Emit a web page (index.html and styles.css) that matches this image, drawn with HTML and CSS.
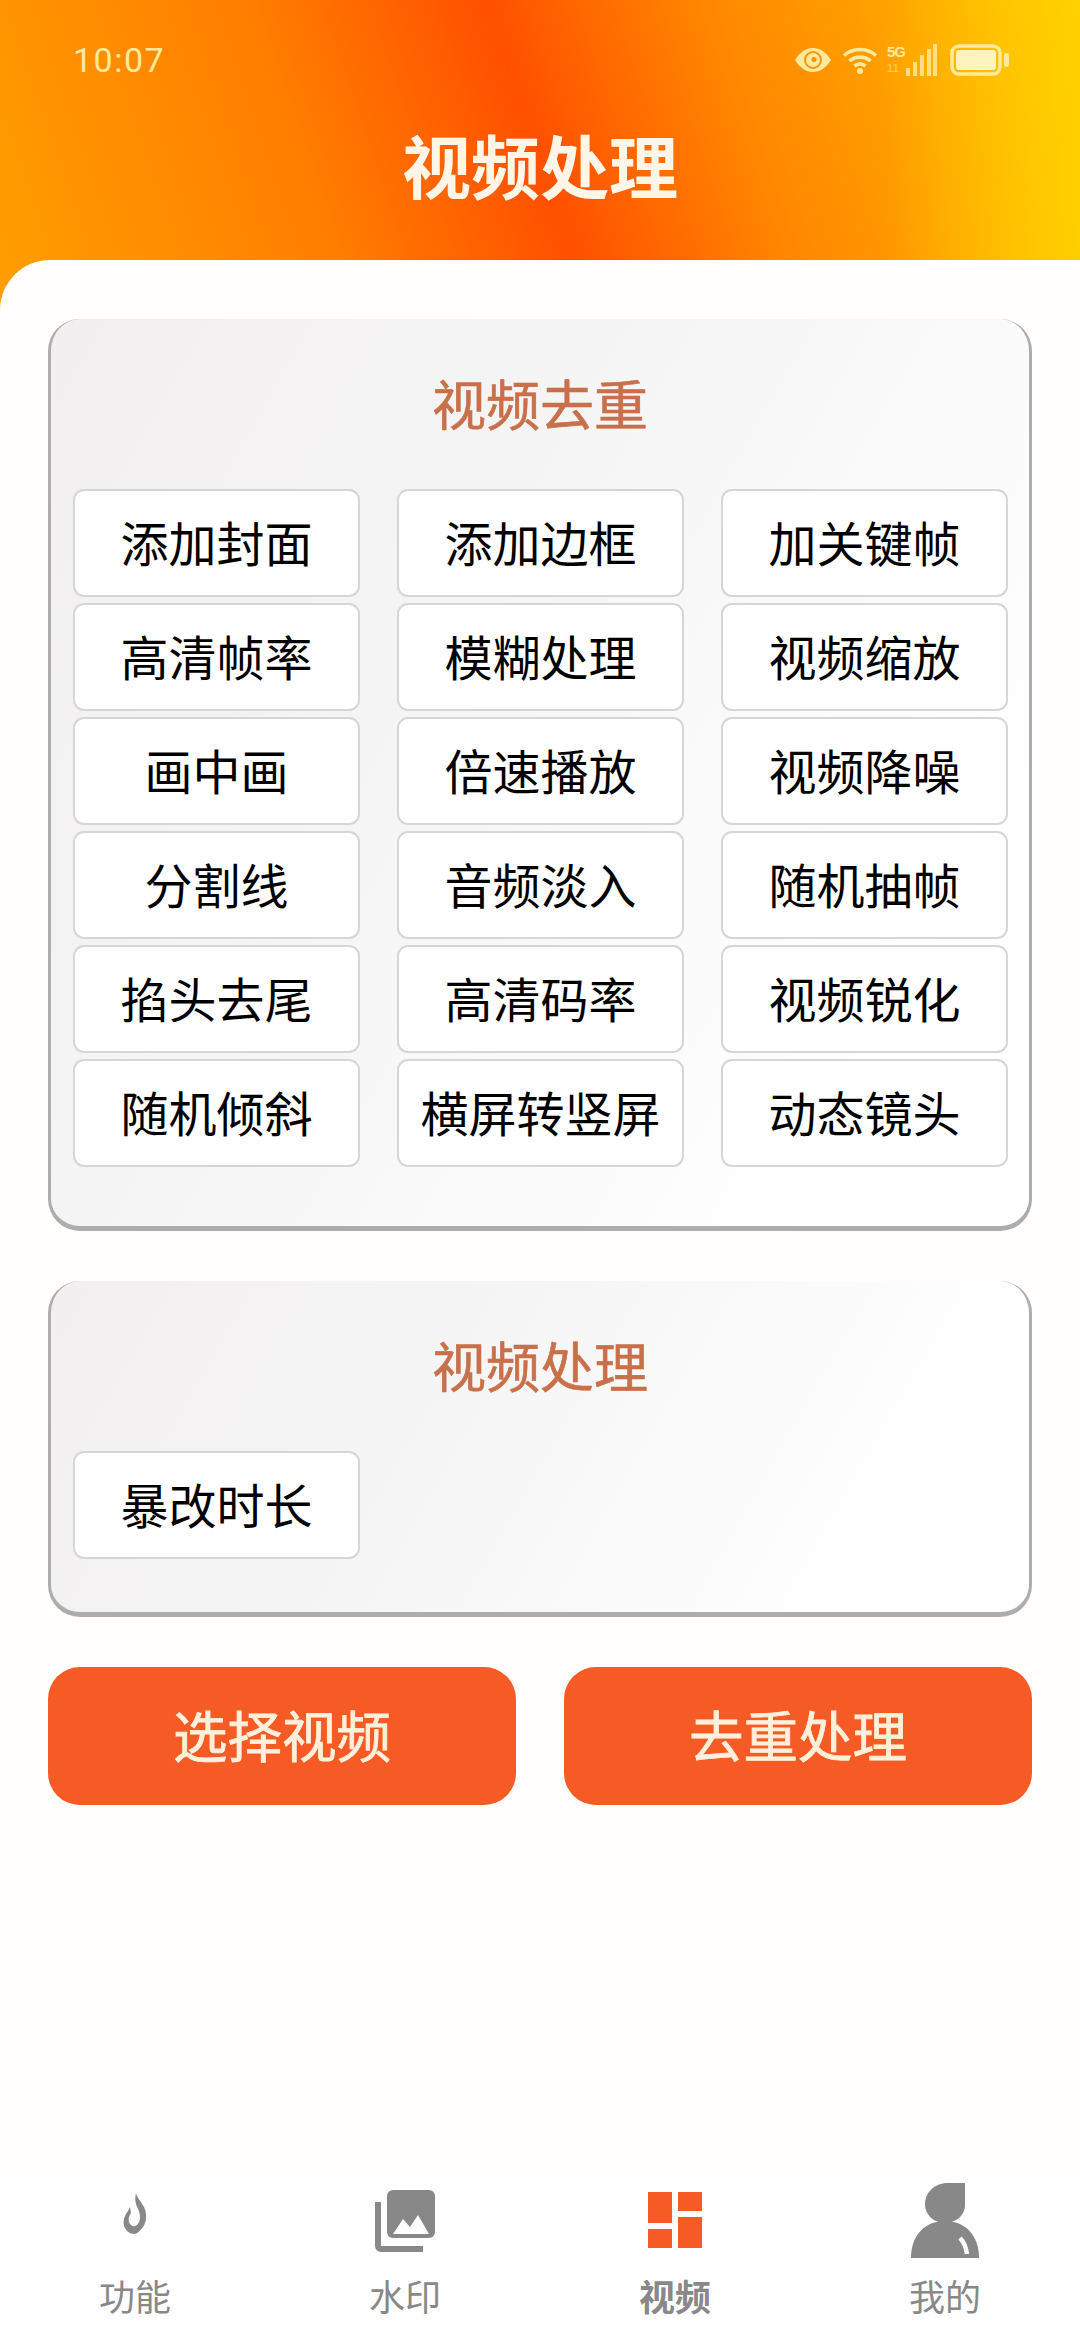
FILE: index.html
```html
<!DOCTYPE html>
<html lang="zh-CN">
<head>
<meta charset="utf-8">
<title>视频处理</title>
<link rel="stylesheet" href="styles.css">
</head>
<body>
<div class="app">
  <header class="header">
    <div class="status">
      <span class="time">10:07</span>
      <div class="status-icons">
        <svg class="ic-eye" viewBox="0 0 38 26"><path fill-rule="evenodd" d="M1 13C6 5 12 1 19 1s13 4 18 12c-5 8-11 12-18 12S6 21 1 13zm18-9a9 9 0 1 0 0 18 9 9 0 0 0 0-18z"/><path fill-rule="evenodd" d="M19 6a7 7 0 1 0 0 14 7 7 0 0 0 0-14zm1 4a2 2 0 1 1 0 5 2 2 0 0 1 0-5z"/></svg>
        <svg class="ic-wifi" viewBox="0 0 36 28"><g fill="none" stroke="currentColor" stroke-width="3.6"><path d="M2 9.500C11 1.500 25 1.500 34 9.500"/><path d="M7.500 15C13.500 9.800 22.500 9.800 28.500 15"/><path d="M12.500 20C16 17.200 20 17.200 23.500 20"/></g><circle cx="18" cy="25" r="3"/></svg>
        <div class="net"><span class="net-5g">5G</span><span class="net-hd">11</span></div>
        <svg class="ic-signal" viewBox="0 0 32 32"><rect x="1" y="24" width="4" height="8"/><rect x="8" y="18" width="4" height="14"/><rect x="15" y="11" width="4" height="21"/><rect x="22" y="5" width="4" height="27"/><rect x="28" y="0" width="4" height="32"/></svg>
        <svg class="ic-battery" viewBox="0 0 60 32"><rect x="2" y="2" width="48" height="28" rx="7" fill="none" stroke="currentColor" stroke-width="3.500"/><rect x="6" y="6" width="40" height="20" rx="3" fill="#fff3c0"/><rect x="54" y="9" width="5" height="14" rx="2"/></svg>
      </div>
    </div>
    <h1 class="page-title">视频处理</h1>
  </header>

  <main class="sheet">
    <section class="card card-dedupe">
      <h2 class="card-title">视频去重</h2>
      <div class="grid">
        <div class="opt">添加封面</div><div class="opt">添加边框</div><div class="opt">加关键帧</div>
        <div class="opt">高清帧率</div><div class="opt">模糊处理</div><div class="opt">视频缩放</div>
        <div class="opt">画中画</div><div class="opt">倍速播放</div><div class="opt">视频降噪</div>
        <div class="opt">分割线</div><div class="opt">音频淡入</div><div class="opt">随机抽帧</div>
        <div class="opt">掐头去尾</div><div class="opt">高清码率</div><div class="opt">视频锐化</div>
        <div class="opt">随机倾斜</div><div class="opt">横屏转竖屏</div><div class="opt">动态镜头</div>
      </div>
    </section>

    <section class="card card-process">
      <h2 class="card-title">视频处理</h2>
      <div class="grid">
        <div class="opt">暴改时长</div>
      </div>
    </section>

    <div class="actions">
      <div class="action">选择视频</div>
      <div class="action">去重处理</div>
    </div>
  </main>

  <nav class="tabs">
    <div class="tab">
      <div class="tab-icon">
        <svg class="ic-flame" viewBox="0 0 24 42"><path d="M13 0c1 5 5 8 8 14 3 7 3 14-1 20-3 4-6 7-9 7-4 0-8-3-10-8-1-5 0-10 4-15l2-4 1 6c-2 3-3 6-2 9 1 3 4 5 6 4 3-1 5-4 5-9 0-6-3-9-4-13-1-3-1-7 0-11z"/></svg>
      </div>
      <span class="tab-label">功能</span>
    </div>
    <div class="tab">
      <div class="tab-icon">
        <svg class="ic-photo" viewBox="0 0 60 62"><path d="M0 12h6v44h42v6H6a6 6 0 0 1-6-6z"/><path fill-rule="evenodd" d="M18 0h36a6 6 0 0 1 6 6v36a6 6 0 0 1-6 6H18a6 6 0 0 1-6-6V6a6 6 0 0 1 6-6z"/><path class="photo-hill" d="M18 44l10-15 7 8 8-12 11 19z"/></svg>
      </div>
      <span class="tab-label">水印</span>
    </div>
    <div class="tab tab-active">
      <div class="tab-icon">
        <svg class="ic-grid" viewBox="0 0 54 56"><rect x="0" y="0" width="24" height="31"/><rect x="30" y="0" width="24" height="19"/><rect x="0" y="37" width="24" height="19"/><rect x="30" y="25" width="24" height="31"/></svg>
      </div>
      <span class="tab-label">视频</span>
    </div>
    <div class="tab">
      <div class="tab-icon">
        <svg class="ic-person" viewBox="0 0 68 75"><path d="M37 0h17v22c0 10-9 18-20 18S14 32 14 21 23 0 37 0z"/><path d="M0 75C0 52 14 38 34 38s34 14 34 37z"/><path class="person-shine" d="M49 55c4 4 6 9 7 16" fill="none" stroke-width="4.500"/></svg>
      </div>
      <span class="tab-label">我的</span>
    </div>
  </nav>
</div>
</body>
</html>
```
FILE: styles.css
```css
* { box-sizing: border-box; }
html, body { margin: 0; padding: 0; }
body {
  background: #fff;
  font-family: "Noto Sans CJK SC", "Noto Sans", sans-serif;
  color: #000;
}
.app {
  width: 1080px;
  height: 2340px;
  display: flex;
  flex-direction: column;
  background-color: #fffefd;
  background-image:
    linear-gradient(90deg, rgba(255, 212, 0, 0) 82%, rgba(255, 212, 0, .85) 100%),
    linear-gradient(71deg, #ff9f00 0%, #ff7e00 30%, #ff5000 50%, #ff8600 68%, #ffc000 100%);
  background-size: 100% 320px;
  background-repeat: no-repeat;
  overflow: hidden;
}
.header { height: 260px; padding-top: 40px; flex: none; }
.status {
  height: 40px;
  padding: 0 70px 0 73px;
  display: flex;
  align-items: center;
  justify-content: space-between;
  color: #ffe99c;
}
.time { font-family: Roboto, sans-serif; font-size: 34px; letter-spacing: 1.500px; }
.status-icons { display: flex; align-items: center; fill: currentColor; }
.ic-eye { width: 38px; height: 26px; margin-right: 10px; }
.ic-wifi { width: 36px; height: 28px; margin-right: 9px; }
.net { width: 18px; height: 32px; display: flex; flex-direction: column; font-family: "Liberation Sans", sans-serif; font-weight: 700; line-height: 15px; }
.net-5g { font-size: 15px; letter-spacing: -1px; }
.net-hd { font-size: 11px; opacity: .5; margin-top: 2px; }
.ic-signal { width: 32px; height: 32px; margin-right: 13px; opacity: .85; }
.ic-battery { width: 60px; height: 32px; }
.page-title {
  margin: 34px 0 0;
  height: 100px;
  line-height: 100px;
  text-align: center;
  font-size: 69px;
  font-weight: 700;
  color: #fff6e8;
}
.sheet {
  flex: 1;
  background: #fffefd;
  border-top-left-radius: 50px;
  padding: 59px 48px 0;
}
.card {
  border-style: solid;
  border-color: #adadad;
  border-width: 0 3px 5px 3px;
  border-radius: 32px;
  background: linear-gradient(120deg, #f1efef 0%, #f6f5f5 40%, #ffffff 85%);
}
.card-dedupe { padding: 47px 22px 59px; }
.card-process { margin-top: 50px; padding: 47px 22px 53px; }
.card-title {
  margin: 0 0 49px;
  height: 74px;
  line-height: 74px;
  text-align: center;
  font-size: 54px;
  font-weight: 400;
  color: #c8704a;
  -webkit-text-stroke: .6px #c8704a;
}
.grid {
  display: grid;
  grid-template-columns: repeat(3, 287px);
  column-gap: 37px;
  row-gap: 6px;
}
.opt {
  height: 108px;
  padding-bottom: 5px;
  display: flex;
  align-items: center;
  justify-content: center;
  background: #fff;
  border: 2px solid #d6d6d6;
  border-radius: 11px;
  font-size: 48px;
  color: #000;
  white-space: nowrap;
}
.actions {
  margin-top: 50px;
  display: flex;
  gap: 48px;
}
.action {
  flex: 1;
  height: 138px;
  padding-bottom: 5px;
  display: flex;
  align-items: center;
  justify-content: center;
  background: #f65b25;
  border-radius: 32px;
  font-size: 54.500px;
  font-weight: 400;
  color: #fff0dc;
  -webkit-text-stroke: .8px #fff0dc;
}
.tabs {
  flex: none;
  height: 158px;
  display: grid;
  grid-template-columns: repeat(4, 270px);
  background: #fffefe;
}
.tab { display: flex; flex-direction: column; align-items: center; color: #888; fill: #888; }
.tab-icon { height: 76px; display: flex; align-items: center; justify-content: center; }
.tab-label { margin-top: 12px; font-size: 36px; line-height: 50px; }
.tab-active .tab-label { font-weight: 700; }
.tab-active { fill: #f65b25; }
.ic-flame { width: 24px; height: 42px; margin-bottom: 12px; }
.ic-photo { width: 60px; height: 62px; margin-top: 2px; }
.ic-grid { width: 54px; height: 56px; }
.ic-person { width: 68px; height: 75px; }
.photo-hill { fill: #fff; }
.person-shine { stroke: #fff; }
```
